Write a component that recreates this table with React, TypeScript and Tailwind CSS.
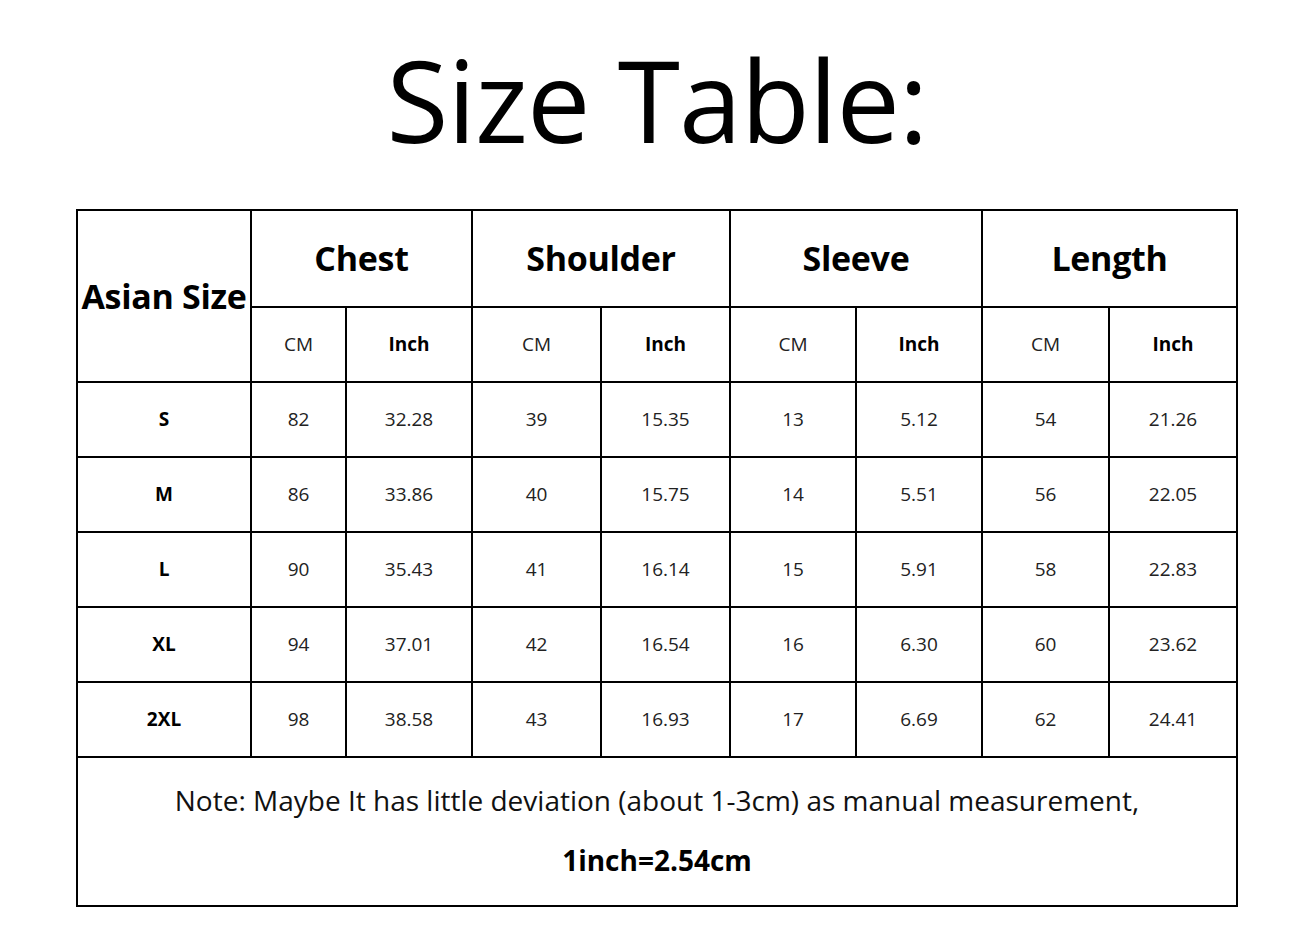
const font = { fontFamily: '"Open Sans", "Noto Sans", sans-serif' }

const groups = ['Chest', 'Shoulder', 'Sleeve', 'Length']

const rows = [
  ['S', '82', '32.28', '39', '15.35', '13', '5.12', '54', '21.26'],
  ['M', '86', '33.86', '40', '15.75', '14', '5.51', '56', '22.05'],
  ['L', '90', '35.43', '41', '16.14', '15', '5.91', '58', '22.83'],
  ['XL', '94', '37.01', '42', '16.54', '16', '6.30', '60', '23.62'],
  ['2XL', '98', '38.58', '43', '16.93', '17', '6.69', '62', '24.41'],
]

export default function App() {
  return (
    <div className="w-[1295px] h-[927px] bg-white text-black overflow-hidden" style={font}>
      <div className="ml-[76px] w-[1162px]">
        {/* Title */}
        <div className="h-[209px] flex justify-center pt-[29px]">
          <h1 className="text-[113px] leading-[140px] font-normal tracking-[-1px]">Size Table:</h1>
        </div>

        {/* Table */}
        <div className="grid grid-cols-[172px_93px_124px_127px_127px_124px_124px_125px_126px] grid-rows-[95px_73px_73px_73px_73px_73px_73px_147px] gap-[2px] p-[2px] bg-black">
          <div className="row-span-2 bg-white flex items-center justify-center text-[34px] font-bold tracking-[-0.3px]">
            Asian Size
          </div>
          {groups.map((g) => (
            <div key={g} className="col-span-2 bg-white flex items-center justify-center text-[34px] font-bold tracking-[-0.3px]">
              {g}
            </div>
          ))}
          {groups.map((g) => (
            <>
              <div key={g + 'cm'} className="bg-white flex items-center justify-center text-[19px] text-[#222]">
                CM
              </div>
              <div key={g + 'in'} className="bg-white flex items-center justify-center text-[19px] font-bold">
                Inch
              </div>
            </>
          ))}
          {rows.map((r) =>
            r.map((c, i) => (
              <div
                key={r[0] + i}
                className={
                  i === 0
                    ? 'bg-white flex items-center justify-center text-[19px] font-bold'
                    : 'bg-white flex items-center justify-center text-[19px] text-[#222]'
                }
              >
                {c}
              </div>
            ))
          )}
          <div className="col-span-9 bg-white flex flex-col items-center pt-[12px]">
            <p className="text-[28px] leading-[60px] text-[#111]">
              Note: Maybe It has little deviation (about 1-3cm) as manual measurement,
            </p>
            <p className="text-[28px] leading-[60px] font-bold">1inch=2.54cm</p>
          </div>
        </div>
      </div>
    </div>
  )
}
